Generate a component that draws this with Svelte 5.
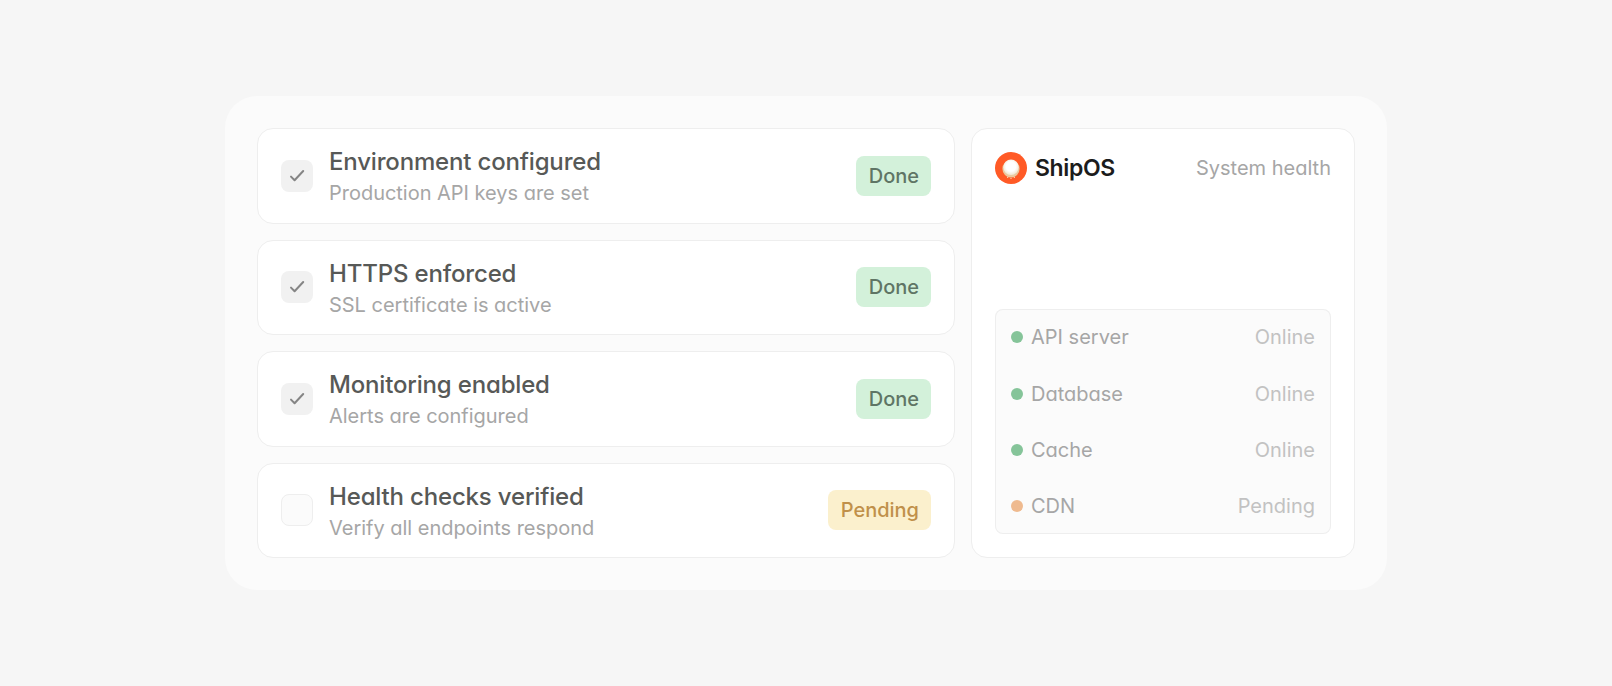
<script>
  const checks = [
    { title: 'Environment configured', note: 'Production API keys are set', done: true },
    { title: 'HTTPS enforced', note: 'SSL certificate is active', done: true },
    { title: 'Monitoring enabled', note: 'Alerts are configured', done: true },
    { title: 'Health checks verified', note: 'Verify all endpoints respond', done: false }
  ];

  const services = [
    { name: 'API server', online: true },
    { name: 'Database', online: true },
    { name: 'Cache', online: true },
    { name: 'CDN', online: false }
  ];
</script>

<main>
  <div class="panel">
    <div class="checks">
      {#each checks as check}
        <div class="card check">
          <span class="box" class:checked={check.done}>
            {#if check.done}
              <svg width="32" height="32" viewBox="0 0 32 32">
                <path d="M10 16.6 L13.6 20.2 L22.2 11" />
              </svg>
            {/if}
          </span>
          <div class="text">
            <div class="title">{check.title}</div>
            <div class="note">{check.note}</div>
          </div>
          <span class="badge" class:pending={!check.done}>{check.done ? 'Done' : 'Pending'}</span>
        </div>
      {/each}
    </div>

    <div class="card health">
      <div class="header">
        <svg class="logo" width="32" height="32" viewBox="0 0 32 32">
          <defs>
            <radialGradient id="glow" cx="0.5" cy="0.45" r="0.52">
              <stop offset="0.6" stop-color="#ffffff" />
              <stop offset="1" stop-color="#f3ead8" />
            </radialGradient>
          </defs>
          <circle cx="16" cy="16" r="16" fill="#ff5a26" />
          <circle cx="16" cy="16.8" r="8.6" fill="#ebc9a0" />
          <circle cx="16" cy="15.2" r="7.7" fill="url(#glow)" />
          <path d="M12 25.5h1.2M15.4 26.5h1.2M18.8 25.5h1.2" stroke="#ffc7a0" />
        </svg>
        <span class="brand">ShipOS</span>
        <span class="label">System health</span>
      </div>
      <div class="services">
        {#each services as service}
          <div class="service">
            <span class="dot" class:waiting={!service.online}></span>
            <span class="name">{service.name}</span>
            <span class="status">{service.online ? 'Online' : 'Pending'}</span>
          </div>
        {/each}
      </div>
    </div>
  </div>
</main>

<style>
  :global(body) {
    background: #f6f6f6;
  }

  main {
    height: 686px;
    display: flex;
    align-items: center;
    justify-content: center;
    font-family: Inter, "Liberation Sans", sans-serif;
    font-feature-settings: "cv11";
    font-size: 20px;
    line-height: 28px;
    color: #a6a6a6;
  }

  .panel {
    box-sizing: border-box;
    width: 1162px;
    height: 494px;
    padding: 32px;
    display: flex;
    gap: 16px;
    border-radius: 32px;
    background: #fbfbfb;
  }

  .checks {
    flex: 1;
    display: flex;
    flex-direction: column;
    gap: 16px;
  }

  .card {
    box-sizing: border-box;
    border: 1px solid #eeeeee;
    border-radius: 16px;
    background: #fff;
  }

  .check {
    flex: 1;
    display: flex;
    align-items: center;
    gap: 16px;
    padding: 0 23px;
  }

  .box {
    box-sizing: border-box;
    width: 32px;
    height: 32px;
    border: 1px solid #eeeeee;
    border-radius: 8px;
    background: #fbfbfb;
  }

  .box.checked {
    border: none;
    background: #f1f1f1;
  }

  .box svg {
    display: block;
    fill: none;
    stroke: #858585;
    stroke-width: 2;
    stroke-linecap: round;
    stroke-linejoin: round;
  }

  .text {
    flex: 1;
  }

  .note {
    letter-spacing: -0.02px;
  }

  .title {
    font-size: 24px;
    line-height: 35px;
    font-weight: 500;
    letter-spacing: -0.17px;
    color: #575957;
  }

  .badge {
    padding: 6px 12px 6px 12.7px;
    border-radius: 8px;
    background: #d3f1da;
    color: #5f7565;
    font-weight: 500;
  }

  .badge.pending {
    background: #fbf0cd;
    color: #c0904a;
  }

  .health {
    width: 384px;
    padding: 23px;
    display: flex;
    flex-direction: column;
    justify-content: space-between;
  }

  .header {
    display: flex;
    align-items: center;
    gap: 8px;
    height: 32px;
  }

  .brand {
    flex: 1;
    font-size: 23px;
    font-weight: 600;
    letter-spacing: -0.35px;
    color: #1c1c1c;
  }

  .services {
    box-sizing: border-box;
    height: 225px;
    padding: 0.4px 16px 0;
    display: flex;
    flex-direction: column;
    border-radius: 8px;
    background: #fbfbfb;
    box-shadow: inset 0 0 0 1px #eeeeee;
  }

  .service {
    flex: 1;
    display: flex;
    align-items: center;
    gap: 8px;
  }

  .dot {
    width: 12px;
    height: 12px;
    border-radius: 50%;
    background: #85c499;
  }

  .dot.waiting {
    background: #efba8f;
  }

  .name {
    flex: 1;
  }

  .status {
    color: #c2c2c2;
  }
</style>
